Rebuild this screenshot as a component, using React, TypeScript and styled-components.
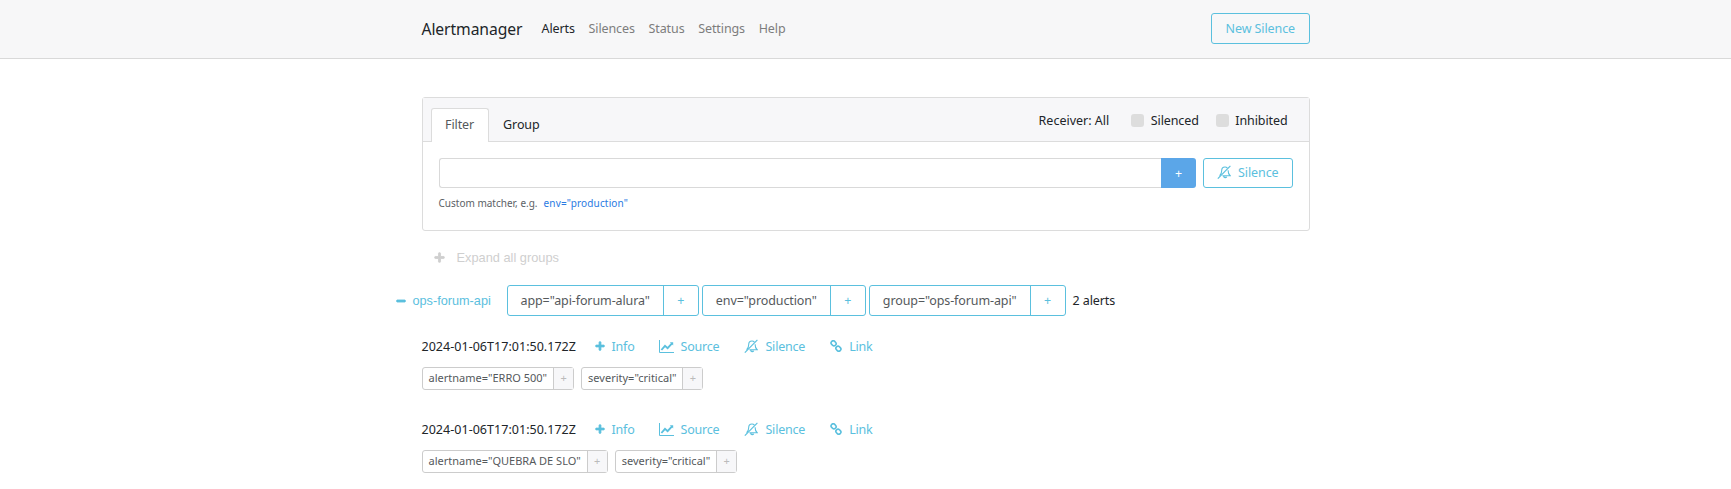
import React from "react";
import styled, { createGlobalStyle } from "styled-components";
import { FaMinus, FaPlus } from "react-icons/fa";

const UI_FONT = `"Noto Sans", "Open Sans", sans-serif`;
const CYAN = "#5bc0de";

const GlobalStyle = createGlobalStyle`
  html, body {
    margin: 0;
    background: #fff;
    color: #212529;
    font-family: ${UI_FONT};
    font-size: 12.5px;
    letter-spacing: -0.1px;
  }
  * { box-sizing: border-box; }
`;

const BellSlash = () => (
  <svg width="14" height="14" viewBox="0 0 14 14" fill="none" stroke="currentColor" strokeWidth="1.1">
    <path d="M2.6 10.8C4.4 9.4 4.7 7.4 4.7 5.6 4.7 3.6 6.2 2 8 2c1 0 1.8.4 2.4 1" />
    <path d="M11.1 5.2c0 2.2.5 4.3 2.1 5.6H5.4" />
    <path d="M6.6 11.2a1.6 1.6 0 0 0 3 .4" strokeWidth="1.4" />
    <path d="M.8 13.6 13.4.8" strokeWidth="1.2" />
  </svg>
);

const LineChart = () => (
  <svg width="15" height="13" viewBox="0 0 15 13" fill="none" stroke="currentColor">
    <path d="M.5 0v12.5H15" strokeWidth="1" />
    <path d="M2.4 10 6 5.8l2.6 2.4L13 3.4" strokeWidth="1.9" />
    <path d="M10.8 2.2h3.4v3.4z" fill="currentColor" stroke="none" />
  </svg>
);

const ChainLink = () => (
  <svg width="12" height="12" viewBox="0 0 12 12" fill="none" stroke="currentColor" strokeWidth="1.6">
    <rect x="1" y="1.2" width="5.2" height="4.2" rx="2" transform="rotate(45 3.6 3.3)" />
    <rect x="5.8" y="6.6" width="5.2" height="4.2" rx="2" transform="rotate(45 8.4 8.7)" />
  </svg>
);

const Navbar = styled.header`
  height: 59px;
  background: #f7f7f8;
  border-bottom: 1px solid #d9d9d9;
`;

const NavInner = styled.div`
  width: 888px;
  height: 58px;
  margin: 0 auto;
  display: flex;
  align-items: center;
`;

const Brand = styled.div`
  font-size: 15.7px;
  color: #212529;
  width: 120px;
`;

const NavLinks = styled.nav`
  display: flex;
  flex-grow: 1;
  gap: 13.7px;
  padding-bottom: 2px;
`;

const NavLink = styled.a<{ $active?: boolean }>`
  color: ${(p) => (p.$active ? "#212529" : "#7d7d7d")};
`;

const OutlineButton = styled.button`
  height: 30px;
  padding: 0 13px 2px;
  border: 1px solid ${CYAN};
  border-radius: 3px;
  background: transparent;
  color: ${CYAN};
  font: 12.5px ${UI_FONT};
  letter-spacing: -0.1px;
  display: flex;
  align-items: center;
  gap: 7px;
`;

const NavButton = styled(OutlineButton)`
  height: 31px;
  padding: 0 13.5px 1px;
  margin-bottom: 1px;
`;

const Main = styled.main`
  width: 888px;
  margin: 38px auto 0;
`;

const Card = styled.section`
  height: 134px;
  border: 1px solid #dcdcdc;
  border-radius: 3px;
`;

const CardHeader = styled.div`
  height: 44px;
  background: #f7f7f9;
  border-bottom: 1px solid #dcdcdc;
  padding: 10px 21px 0 8px;
  display: flex;
  justify-content: space-between;
`;

const Tabs = styled.div`
  display: flex;
`;

const Tab = styled.div<{ $active?: boolean }>`
  height: 34px;
  padding: 0 13.5px;
  line-height: 32px;
  color: ${(p) => (p.$active ? "#55595c" : "#212529")};
  background: ${(p) => (p.$active ? "#fff" : "transparent")};
  border: 1px solid ${(p) => (p.$active ? "#dcdcdc" : "transparent")};
  border-bottom: 0;
  border-radius: 3px 3px 0 0;
`;

const HeaderControls = styled.div`
  display: flex;
  align-items: center;
  height: 25px;
`;

const Receiver = styled.span`
  margin-right: 22px;
  letter-spacing: 0;
`;

const CheckLabel = styled.label`
  display: flex;
  align-items: center;
  gap: 6.5px;
  margin-right: 17px;
  &:last-child { margin-right: 0; }
`;

const CheckBox = styled.span`
  width: 13px;
  height: 13px;
  border-radius: 3px;
  background: #dddddd;
`;

const CardBody = styled.div`
  padding: 16px 16px 0;
`;

const FilterRow = styled.div`
  display: flex;
  align-items: stretch;
  height: 30px;
`;

const FilterInput = styled.div`
  flex-grow: 1;
  border: 1px solid #d9d9d9;
  border-right: 0;
  border-radius: 3px 0 0 3px;
`;

const AddButton = styled.div`
  width: 35px;
  background: #5ba6e8;
  color: #fff;
  border-radius: 0 3px 3px 0;
  margin-right: 7px;
  display: flex;
  align-items: center;
  justify-content: center;
`;

const HelpText = styled.div`
  margin-top: 8px;
  font-size: 10px;
  letter-spacing: 0;
  color: #5c6166;
  line-height: 15px;
`;

const Example = styled.a`
  margin-left: 6px;
  letter-spacing: 0.15px;
  color: #2a7ae2;
`;

const ExpandAll = styled.div`
  display: flex;
  align-items: center;
  height: 20px;
  margin: 16px 0 0 12px;
  color: #cfcfcf;
  font: 12.8px "Liberation Sans", Arial, sans-serif;
  letter-spacing: 0;
  gap: 12px;
`;

const GroupRow = styled.div`
  display: flex;
  align-items: center;
  height: 31px;
  margin: 18px 0 0 -26px;
`;

const GroupToggle = styled.div`
  display: flex;
  align-items: center;
  gap: 7px;
  width: 111px;
  color: ${CYAN};
  font: 12.7px "Liberation Sans", Arial, sans-serif;
  letter-spacing: 0;
`;

const GroupLabels = styled.div`
  display: flex;
  gap: 3px;
`;

const BigLabel = styled.div`
  display: flex;
  height: 31px;
  border: 1px solid ${CYAN};
  border-radius: 3px;
  color: #55595c;
`;

const BigLabelText = styled.div`
  padding: 0 13px;
  line-height: 29px;
  border-right: 1px solid ${CYAN};
`;

const BigLabelAdd = styled.div`
  width: 34px;
  text-align: center;
  line-height: 29px;
  color: ${CYAN};
`;

const AlertCount = styled.div`
  margin-left: 7px;
`;

const AlertBlock = styled.article`
  margin-top: 19px;
  & + & { margin-top: 28px; }
`;

const AlertHead = styled.div`
  display: flex;
  align-items: center;
  height: 22px;
`;

const Timestamp = styled.span`
  width: 173px;
  letter-spacing: 0.03px;
`;

const Action = styled.a`
  display: flex;
  align-items: center;
  gap: 7px;
  color: ${CYAN};
  margin-right: 25px;
  letter-spacing: -0.2px;
`;

const InfoAction = styled(Action)`
  margin-right: 24px;
`;

const SmallLabels = styled.div`
  display: flex;
  gap: 7px;
  margin-top: 10px;
`;

const SmallLabel = styled.div`
  display: flex;
  height: 23px;
  border: 1px solid #cccccc;
  border-radius: 3px;
  font-size: 11px;
  letter-spacing: 0;
  color: #55595c;
`;

const SmallLabelText = styled.div`
  padding: 0 6px;
  line-height: 20px;
  border-right: 1px solid #cccccc;
`;

const SmallLabelAdd = styled.div`
  width: 19px;
  text-align: center;
  line-height: 20px;
  background: #f7f7f9;
  color: #bbbbbb;
`;

const groupLabels = ['app="api-forum-alura"', 'env="production"', 'group="ops-forum-api"'];

const alerts = [
  { time: "2024-01-06T17:01:50.172Z", labels: ['alertname="ERRO 500"', 'severity="critical"'] },
  { time: "2024-01-06T17:01:50.172Z", labels: ['alertname="QUEBRA DE SLO"', 'severity="critical"'] },
];

export default function App() {
  return (
    <>
      <GlobalStyle />
      <Navbar>
        <NavInner>
          <Brand>Alertmanager</Brand>
          <NavLinks>
            <NavLink $active>Alerts</NavLink>
            <NavLink>Silences</NavLink>
            <NavLink>Status</NavLink>
            <NavLink>Settings</NavLink>
            <NavLink>Help</NavLink>
          </NavLinks>
          <NavButton>New Silence</NavButton>
        </NavInner>
      </Navbar>
      <Main>
        <Card>
          <CardHeader>
            <Tabs>
              <Tab $active>Filter</Tab>
              <Tab>Group</Tab>
            </Tabs>
            <HeaderControls>
              <Receiver>Receiver: All</Receiver>
              <CheckLabel>
                <CheckBox />
                Silenced
              </CheckLabel>
              <CheckLabel>
                <CheckBox />
                Inhibited
              </CheckLabel>
            </HeaderControls>
          </CardHeader>
          <CardBody>
            <FilterRow>
              <FilterInput />
              <AddButton>+</AddButton>
              <OutlineButton>
                <BellSlash />
                Silence
              </OutlineButton>
            </FilterRow>
            <HelpText>
              Custom matcher, e.g.
              <Example>env="production"</Example>
            </HelpText>
          </CardBody>
        </Card>
        <ExpandAll>
          <FaPlus size={11} stroke="currentColor" strokeWidth={40} />
          Expand all groups
        </ExpandAll>
        <GroupRow>
          <GroupToggle>
            <FaMinus size={10} stroke="currentColor" strokeWidth={50} />
            ops-forum-api
          </GroupToggle>
          <GroupLabels>
            {groupLabels.map((label) => (
              <BigLabel key={label}>
                <BigLabelText>{label}</BigLabelText>
                <BigLabelAdd>+</BigLabelAdd>
              </BigLabel>
            ))}
          </GroupLabels>
          <AlertCount>2 alerts</AlertCount>
        </GroupRow>
        {alerts.map((alert) => (
          <AlertBlock key={alert.labels[0]}>
            <AlertHead>
              <Timestamp>{alert.time}</Timestamp>
              <InfoAction>
                <FaPlus size={10} stroke="currentColor" strokeWidth={40} />
                Info
              </InfoAction>
              <Action>
                <LineChart />
                Source
              </Action>
              <Action>
                <BellSlash />
                Silence
              </Action>
              <Action>
                <ChainLink />
                Link
              </Action>
            </AlertHead>
            <SmallLabels>
              {alert.labels.map((label) => (
                <SmallLabel key={label}>
                  <SmallLabelText>{label}</SmallLabelText>
                  <SmallLabelAdd>+</SmallLabelAdd>
                </SmallLabel>
              ))}
            </SmallLabels>
          </AlertBlock>
        ))}
      </Main>
    </>
  );
}
